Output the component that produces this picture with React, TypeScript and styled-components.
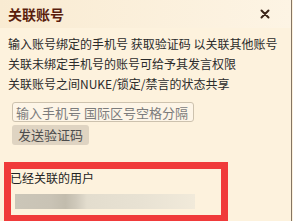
import React from "react";
import styled, { createGlobalStyle } from "styled-components";

const GlobalStyle = createGlobalStyle`
  html, body {
    margin: 0;
    padding: 0;
    background: #fdf2dd;
  }
  * {
    box-sizing: border-box;
  }
`;

const Panel = styled.div`
  width: 292px;
  height: 221px;
  overflow: hidden;
  background: #fdf2dd;
  border-right: 1px solid #857563;
  font-family: "Noto Sans CJK SC", "Noto Sans", sans-serif;
  color: #2b2b2b;
`;

const Header = styled.div`
  display: flex;
  align-items: center;
  justify-content: space-between;
  height: 28px;
  padding: 0 19px 0 8px;
  background: linear-gradient(to right, #f9ebd2, #fdf4e4);
`;

const Title = styled.h3`
  margin: 0;
  font-size: 14px;
  line-height: 16px;
  font-weight: 700;
  color: #5a1d0d;
`;

const CloseButton = styled.button`
  border: none;
  background: none;
  padding: 0;
  width: 14px;
  height: 14px;
  display: flex;
  align-items: center;
  justify-content: center;
  cursor: pointer;
`;

const Body = styled.div`
  padding: 0 8px;
`;

const Intro = styled.p`
  margin: 6px 0 0;
  font-size: 12px;
  line-height: 20px;
  white-space: nowrap;
`;

const Form = styled.div`
  display: flex;
  flex-direction: column;
  align-items: flex-start;
  gap: 3px;
  margin-top: 8px;
  padding-left: 4px;
`;

const PhoneInput = styled.input`
  width: 182px;
  height: 20px;
  padding: 0 3px;
  border: 1px solid #cdc2ae;
  border-radius: 3px;
  background: #fdf5e7;
  font-family: inherit;
  font-size: 13px;
  line-height: 18px;
  color: #333;
  outline: none;
  &::placeholder {
    color: #7c7c7c;
  }
`;

const SendButton = styled.button`
  height: 20px;
  padding: 0 6px;
  border: none;
  border-radius: 3px;
  background: #dfd4c2;
  font-family: inherit;
  font-size: 13px;
  line-height: 20px;
  color: #4d4d4d;
  cursor: pointer;
`;

const Linked = styled.section`
  position: relative;
  margin-top: 25px;
  padding-left: 2px;
`;

const LinkedLabel = styled.div`
  font-size: 12px;
  line-height: 16px;
  color: #222;
`;

const BlurredUser = styled.div`
  margin: 8px 0 0 5px;
  width: 180px;
  height: 15px;
  background: linear-gradient(
    to right,
    #cbc6b8 0%,
    #c9c3b5 20%,
    #c2bcad 28%,
    #cfc9bb 34%,
    #e3ddce 40%,
    #e8e2d3 70%,
    #f1eada 100%
  );
  filter: blur(0.6px);
`;

const Highlight = styled.div`
  position: absolute;
  left: -4px;
  top: -8px;
  width: 224px;
  height: 60px;
  border: 7px solid #f03a3a;
  pointer-events: none;
`;

const CloseIcon = () => (
  <svg width="10" height="10" viewBox="0 0 10 10">
    <path d="M1.5 1.5 L8.5 8.5 M8.5 1.5 L1.5 8.5" stroke="#3a2418" strokeWidth="2" strokeLinecap="round" />
  </svg>
);

export default function App() {
  return (
    <>
      <GlobalStyle />
      <Panel>
        <Header>
          <Title>关联账号</Title>
          <CloseButton aria-label="关闭">
            <CloseIcon />
          </CloseButton>
        </Header>
        <Body>
          <Intro>
            输入账号绑定的手机号 获取验证码 以关联其他账号
            <br />
            关联未绑定手机号的账号可给予其发言权限
            <br />
            关联账号之间NUKE/锁定/禁言的状态共享
          </Intro>
          <Form>
            <PhoneInput placeholder="输入手机号 国际区号空格分隔" />
            <SendButton>发送验证码</SendButton>
          </Form>
          <Linked>
            <LinkedLabel>已经关联的用户</LinkedLabel>
            <BlurredUser />
            <Highlight />
          </Linked>
        </Body>
      </Panel>
    </>
  );
}
